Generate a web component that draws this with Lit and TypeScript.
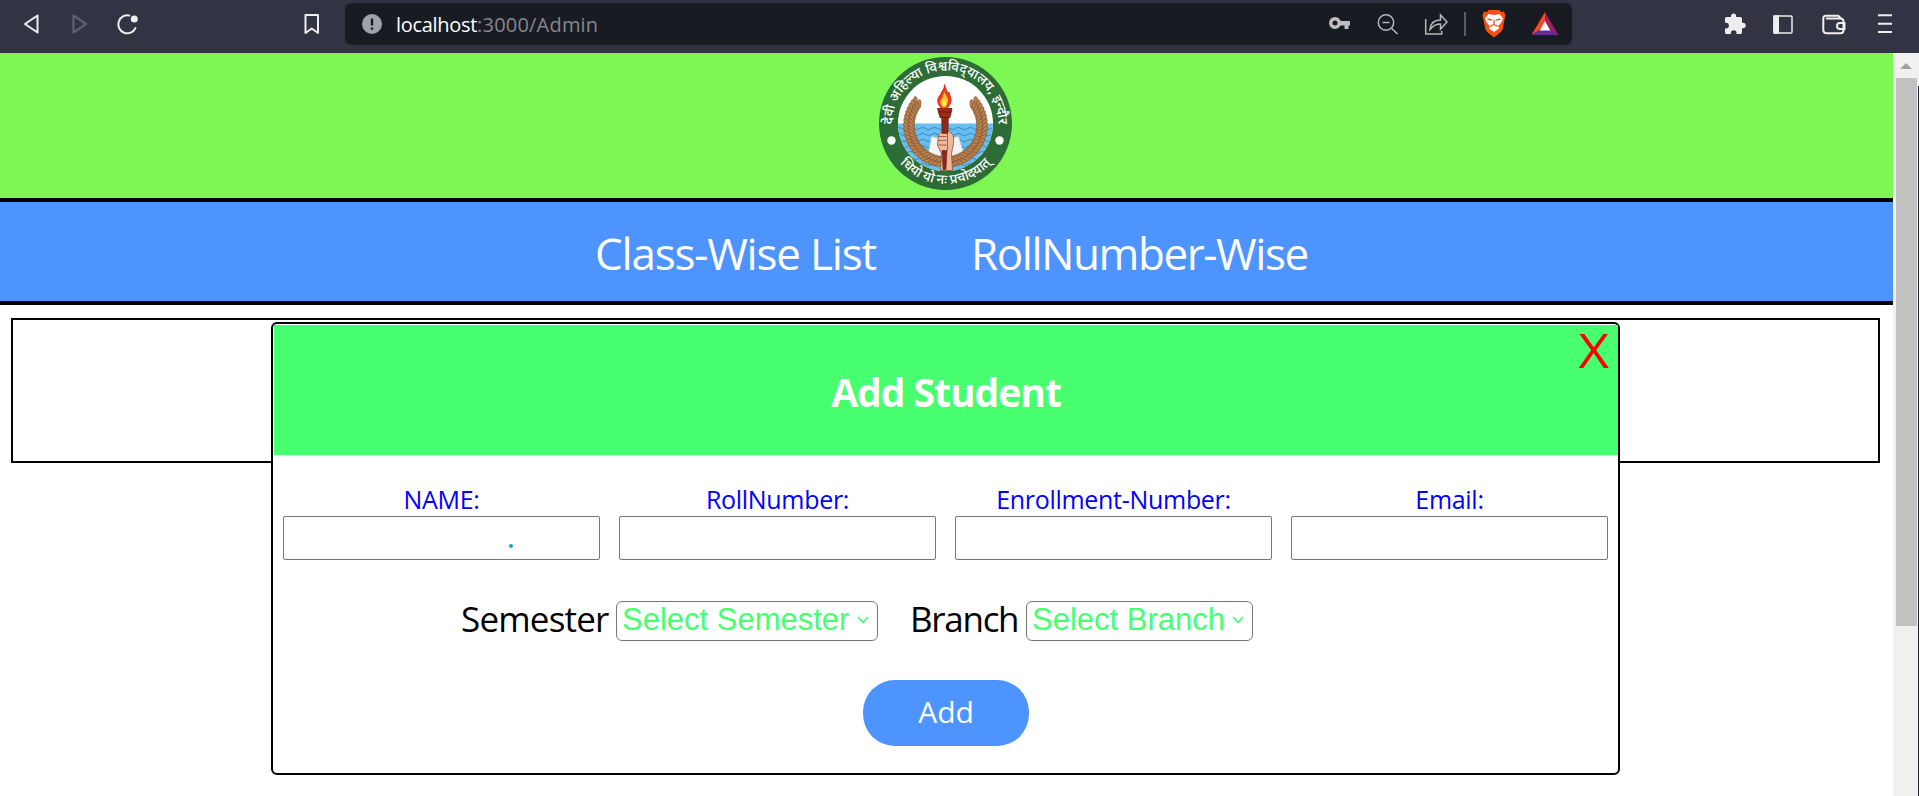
import { LitElement, html, css, svg } from "lit";
import { customElement } from "lit/decorators.js";

const pageFont = css`"Open Sans", "Noto Sans", sans-serif`;

@customElement("browser-bar")
class BrowserBar extends LitElement {
  static styles = css`
    :host { display: flex; height: 53px; background: #323443; align-items: flex-start; font-family: ${pageFont}; box-sizing: border-box; }
    svg { display: block; flex: none; overflow: visible; }
    .left { width: 345px; height: 48px; flex: none; }
    .url { display: flex; width: 1227px; height: 42px; margin-top: 3px; background: #191b22; border-radius: 6px; align-items: center; flex: none; }
    .warn { margin-left: 17px; margin-right: 14px; }
    .address { flex: 1; font-size: 20px; line-height: 43px; white-space: nowrap; color: #85878c; }
    .host { color: #fff; letter-spacing: -0.3px; }
    .path { letter-spacing: 0.2px; }
    .right { width: 347px; height: 53px; flex: none; }
  `;
  render() {
    return html`
      <svg class="left" viewBox="0 0 345 48" fill="none" stroke="#eee" stroke-width="2" stroke-linejoin="round" stroke-linecap="round">
        <path d="M37.500 15.500v17L25 24z" />
        <path d="M73.500 15.500v17L86 24z" stroke="#636575" />
        <path d="M129.500 15.600a9 9 0 1 0 6 12.500" />
        <circle cx="134.300" cy="19" r="3.500" fill="#eee" stroke="none" />
        <path d="M305.500 15h12.500v18l-6.250-4.500-6.250 4.500z" />
      </svg>
      <div class="url">
        <svg class="warn" width="20" height="20" viewBox="0 0 20 20"><circle cx="10" cy="10" r="10" fill="#a0a2aa" /><path d="M10 4.500v7M10 13.500v2.300" stroke="#191b22" stroke-width="2.400" /></svg>
        <div class="address"><span class="host">localhost</span><span class="path">:3000/Admin</span></div>
        <svg width="252" height="42" viewBox="1320 3 252 42">
          <g fill="#bfbfbf"><path fill-rule="evenodd" d="M1335 17a6 6 0 1 1 0 12 6 6 0 0 1 0-12zm0 3.500a2.500 2.500 0 1 0 0 5 2.500 2.500 0 0 0 0-5z" /><path d="M1339.500 21h10.500v4.500h-1.500v3.500h-4v-3.500h-5z" /></g>
          <g fill="none" stroke="#b8b8b8" stroke-width="1.500"><circle cx="1386" cy="22.500" r="7.700" /><path d="M1391.500 28.200l6 5.800M1382.500 22.500h7M1425.700 19v15h16v-3M1430 29.500c.5-6 4-9.500 10.500-9.500v-5l6.500 7-6.500 7v-5c-4.500 0-7.500 1.500-10.500 5.500z" /></g>
          <path d="M1465 12v24" stroke="#74757a" stroke-width="1.500" />
          <path d="M1488.500 10h11l1.500 2 3-.5 1.500 4-.8 3-2 10.500q-.5 2-2.200 3.300l-6.500 5.200-6.500-5.200q-1.700-1.300-2.200-3.300l-2-10.500-.8-3 1.500-4 3 .5z" fill="#fb4f10" />
          <path d="M1488.500 14l5.500 1 5.500-1 3.500 4.500-1.500 3.500-3 4 .5 2.500-5 3.500-5-3.500.5-2.500-3-4-1.500-3.500z" fill="#fff" />
          <path d="M1487.500 19l4.500 1.200M1500.500 19l-4.500 1.200M1489.500 26.500l4.500-2 4.500 2M1494 19.500v5" stroke="#fb4f10" stroke-width="1.300" fill="none" />
          <path d="M1545 12v10l-6 9-7.500 4z" fill="#ff4724" /><path d="M1545 12v10l6 9 7.500 4z" fill="#9e1f63" /><path d="M1531.500 35l7-5h13l7 5z" fill="#662d91" /><path d="M1545 21l5.300 9.500h-10.600z" fill="#fff" />
        </svg>
      </div>
      <svg class="right" viewBox="1572 0 347 53" fill="none" stroke="#eee" stroke-width="2">
        <path fill="#eee" stroke="none" d="M1726.500 17h4.500v-1a2.600 2.600 0 0 1 5.200 0v1h4.300q1.500 0 1.500 1.500v4.300h1a2.700 2.700 0 0 1 0 5.400h-1v4.300q0 1.500-1.500 1.500h-4v-1a2.800 2.800 0 0 0-5.600 0v1h-4.400q-1.500 0-1.500-1.500v-4h1a2.900 2.900 0 0 0 0-5.800h-1v-4.200q0-1.500 1.500-1.500z" />
        <rect x="1774" y="16" width="18" height="17" rx="1" stroke-width="1.500" /><path d="M1773.300 15.300h5.700v18.400h-5.700z" fill="#eee" stroke="none" />
        <path d="M1826 18.500h14q3.500 0 3.500 3v8.500q0 3.300-3 3.300h-13.500q-3.700 0-3.700-3v-12q0-2.500 2.500-2.500h12.500l3 3M1844.500 23h-4.500a3 3 0 0 0 0 6h4.500z" />
        <path d="M1878 15.300h14M1878 23.700h14M1878 32h14" />
      </svg>
    `;
  }
}

@customElement("university-seal")
class UniversitySeal extends LitElement {
  static styles = css`
    :host { display: block; width: 133px; height: 133px; }
    svg { display: block; overflow: visible; }
    .script { font-family: "Noto Sans Devanagari", "Lohit Devanagari", "Noto Sans", sans-serif; font-size: 13.4px; font-weight: 500; fill: #fff; }
  `;
  render() {
    const ear = (i: number, radius: number) => {
      const t = (i / 21) * 2.1 - 0.68;
      const x = -radius * Math.cos(t), y = radius * Math.sin(t) + 2;
      return svg`<ellipse cx=${x} cy=${y} rx="4.500" ry="1.900" transform="rotate(${55 - t * 57} ${x} ${y})" /><ellipse cx=${-x} cy=${y} rx="4.500" ry="1.900" transform="rotate(${-55 + t * 57} ${-x} ${y})" />`;
    };
    const wave = (y: number) => svg`<path d="M-50 ${y}q3-2.500 6 0t6 0 6 0 6 0 6 0 6 0 6 0 6 0 6 0 6 0 6 0 6 0 6 0 6 0 6 0 6 0" />`;
    return html`
      <svg width="133" height="133" viewBox="-66.500 -66.500 133 133">
        <defs><path id="top" d="M-51.400 13A53 53 0 1 1 51.400 13" /><path id="low" d="M-60.500 0A60.500 60.500 0 0 0 60.500 0" /><clipPath id="disc"><circle r="47.500" /></clipPath></defs>
        <circle r="66.500" fill="#2d6c36" /><circle r="47.500" fill="#fff" />
        <g clip-path="url(#disc)"><path d="M-50 0H50V50H-50z" fill="#66bff0" />
          <g fill="none" stroke="#3f86b4" stroke-width="1">${[5, 11, 17, 23, 29, 35, 41].map(wave)}</g>
          <path d="M-14 13L-1 16 13 13 20 36 0 38-18 36z" fill="#f4f4f4" stroke="#c9c9c9" stroke-width=".5" /></g>
        <g fill="#ba8250" stroke="#7d4c28" stroke-width=".6">${[39, 34].map((r) => Array.from({ length: 22 }, (_, i) => ear(i, r)))}</g>
        <path d="M-7 11Q-3 6 3 7L8 12 8 20 6 30 7 47H-5L-4 30-8 22z" fill="#eeb99a" stroke="#8b4f36" stroke-width=".8" />
        <path d="M-4-7h7l-.5 17h-6zM-3.500 27h5l-1 19h-3z" fill="#8e2818" stroke="#541b13" stroke-width=".5" />
        <path d="M-7 13h8M-7.500 17h8.500M-7 21.500h8M2 10v17" fill="none" stroke="#8b4f36" stroke-width=".8" />
        <path d="M-8-15H6.500L4.500-6H-5.500z" fill="#a02b19" stroke="#541b13" stroke-width=".8" /><path d="M-7-11.500H5.500" stroke="#541b13" stroke-width=".8" />
        <path d="M-1-39C2-32 1-31 4-31 4-27 7-26 5-20Q3-16 1-15H-4C-10-21-8-26-5-29-4-33-1-34-1-39z" fill="#ee3b20" stroke="#a51f14" stroke-width=".6" /><path d="M-1-32C0-27 4-26 2-20Q1-16-2-16C-7-20-5-24-3-26z" fill="#ffc42a" /><path d="M-1-25q-4 5-1 8 4-1 1-8z" fill="#fff05a" />
        <circle cx="-54" cy="17" r="4.200" fill="#fff" /><circle cx="54" cy="17" r="4.200" fill="#fff" />
        <text class="script" text-anchor="middle"><textPath href="#top" startOffset="50%">देवी अहिल्या विश्वविद्‌यालय, इन्दौर</textPath></text>
        <text class="script" text-anchor="middle"><textPath href="#low" startOffset="50%">धियो यो नः प्रचोदयात्</textPath></text>
      </svg>`;
  }
}

@customElement("app-root")
class AppRoot extends LitElement {
  static styles = css`
    :host { display: block; height: 796px; overflow: hidden; background: #fff; font-family: ${pageFont}; }
    .view { display: flex; height: 743px; }
    .page { width: 1893px; flex: none; position: relative; }
    .banner { height: 145px; background: #7cf753; display: flex; justify-content: center; padding-top: 4px; box-sizing: border-box; padding-right: 2px; }
    .nav { height: 107px; box-sizing: border-box; border-top: 4px solid #000; border-bottom: 4px solid #000; background: #4d94ff; color: #fff; font-size: 44px; line-height: 102px; white-space: nowrap; display: flex; padding-left: 595px; }
    .first { width: 376px; flex: none; letter-spacing: -1.2px; }
    .second { letter-spacing: -1.4px; }
    .panel { margin: 13px 13px 0 11px; height: 145px; border: 2px solid #000; box-sizing: border-box; }
    .modal { position: absolute; left: 271px; top: 269px; width: 1349px; height: 453px; box-sizing: border-box; border: 2px solid #000; border-radius: 6px; background: #fff; padding: 1px 0 1px 1px; }
    .head { height: 130px; background: #48ff70; position: relative; color: #fff; font-weight: 700; font-size: 39px; line-height: 134px; text-align: center; }
    .title { letter-spacing: -1px; }
    .close { position: absolute; top: 0; right: 10px; color: #f00; font-size: 48px; font-weight: 400; line-height: 50px; transform: scaleX(1.1); }
    .fields { display: grid; grid-template-columns: repeat(4, 317px); gap: 19px; padding: 28px 9px 0; }
    .field { display: flex; flex-direction: column; align-items: center; color: #00f; font-size: 25px; line-height: 33px; white-space: nowrap; letter-spacing: -.3px; }
    .box { display: block; width: 317px; height: 44px; box-sizing: border-box; border: 1px solid #767676; border-radius: 2px; background: #fff; }
    .dot { display: block; width: 4px; height: 4px; border-radius: 2px; background: #12a5cd; margin: 27px 0 0 225px; }
    .choices { display: flex; align-items: flex-start; height: 40px; margin: 41px 0 0 187px; font-size: 35px; line-height: 35px; }
    .caption { width: 155px; flex: none; white-space: nowrap; letter-spacing: -.8px; }
    .branch { width: 116px; margin-left: 32px; letter-spacing: -1.3px; }
    .select { box-sizing: border-box; width: 262px; height: 40px; border: 1px solid #767676; border-radius: 6px; font: 31px/36px "Liberation Sans", sans-serif; color: #48ff70; padding: 0 8px 2px 5px; display: flex; align-items: center; justify-content: space-between; white-space: nowrap; flex: none; }
    .narrow { width: 227px; }
    .add { display: block; width: 166px; height: 66px; margin: 39px auto 0; border: 0; border-radius: 32px; background: #4d94ff; color: #fff; font: 30px/62px ${pageFont}; padding: 0 0 3px; }
    .scroll { width: 26px; background: #f1f1f1; display: flex; flex-direction: column; align-items: center; position: relative; }
    .arrow { width: 12px; height: 6px; margin: 10px 0 9px; background: #a2a2a2; clip-path: polygon(50% 0, 100% 100%, 0 100%); }
    .thumb { width: 21px; height: 548px; background: #c1c1c1; }
    .edge { position: absolute; right: 0; top: 33px; bottom: 0; width: 1px; background: #23242b; }
  `;
  render() {
    const chevron = html`<svg width="12" height="8" viewBox="0 0 12 8"><path d="M1 1l5 5.500L11 1" fill="none" stroke="#48ff70" stroke-width="1.800" /></svg>`;
    return html`
      <browser-bar></browser-bar>
      <div class="view">
        <main class="page">
          <header class="banner"><university-seal></university-seal></header>
          <nav class="nav"><span class="first">Class-Wise List</span><span class="second">RollNumber-Wise</span></nav>
          <section class="panel"></section>
          <section class="modal">
            <div class="head"><span class="title">Add Student</span><span class="close">X</span></div>
            <div class="fields">
              ${["NAME:", "RollNumber:", "Enrollment-Number:", "Email:"].map((label, i) => html`<label class="field"><span>${label}</span><span class="box">${i === 0 ? html`<i class="dot"></i>` : ""}</span></label>`)}
            </div>
            <div class="choices">
              <span class="caption">Semester</span><div class="select"><span>Select Semester</span>${chevron}</div>
              <span class="caption branch">Branch</span><div class="select narrow"><span>Select Branch</span>${chevron}</div>
            </div>
            <button class="add">Add</button>
          </section>
        </main>
        <div class="scroll"><i class="arrow"></i><i class="thumb"></i><i class="edge"></i></div>
      </div>`;
  }
}
